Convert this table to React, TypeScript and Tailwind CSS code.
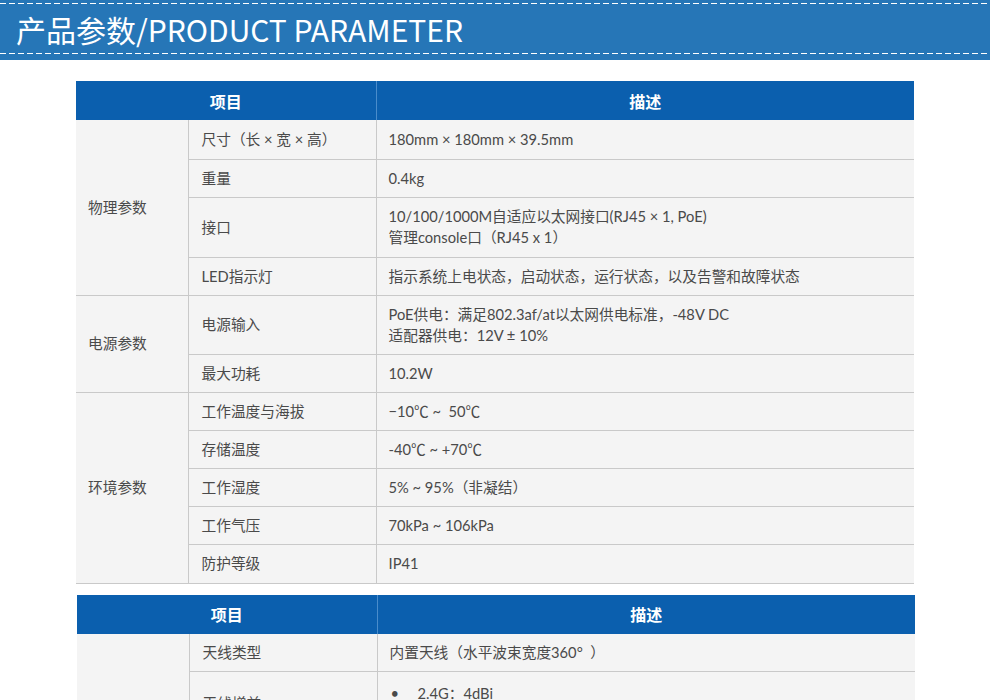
import React from "react";

type Row = { name: string; value: React.ReactNode; h?: string };
type Group = { title: string; rows: Row[] };

const TITLE_FONT = "font-['Noto_Sans_CJK_SC','Noto_Sans',sans-serif]";
const CELL_FONT = "font-['Lato','Noto_Sans_CJK_SC',sans-serif]";

const specs: Group[] = [
  {
    title: "物理参数",
    rows: [
      { name: "尺寸（长 × 宽 × 高）", value: "180mm × 180mm × 39.5mm", h: "h-[39px]" },
      { name: "重量", value: "0.4kg" },
      {
        name: "接口",
        h: "h-[60px]",
        value: (
          <>
            10/100/1000M自适应以太网接口(RJ45 × 1, PoE)
            <br />
            管理console口（RJ45 x 1）
          </>
        ),
      },
      { name: "LED指示灯", value: "指示系统上电状态，启动状态，运行状态，以及告警和故障状态" },
    ],
  },
  {
    title: "电源参数",
    rows: [
      {
        name: "电源输入",
        h: "h-[59px]",
        value: (
          <>
            PoE供电：满足802.3af/at以太网供电标准，-48V DC
            <br />
            适配器供电：12V ± 10%
          </>
        ),
      },
      { name: "最大功耗", value: "10.2W" },
    ],
  },
  {
    title: "环境参数",
    rows: [
      { name: "工作温度与海拔", value: "−10℃ ~\u00a0 50℃" },
      { name: "存储温度", value: "-40℃ ~ +70℃" },
      { name: "工作湿度", value: "5% ~ 95%（非凝结）" },
      { name: "工作气压", value: "70kPa ~ 106kPa" },
      { name: "防护等级", value: "IP41", h: "h-[39px]" },
    ],
  },
];

const radio: Group[] = [
  {
    title: "射频参数",
    rows: [
      { name: "天线类型", value: "内置天线（水平波束宽度360°\u00a0 ）" },
      {
        name: "天线增益",
        h: "h-[64px]",
        value: (
          <ul>
            <li className="flex">
              <span className="w-[28px] pl-[1px]">•</span>2.4G：4dBi
            </li>
            <li className="flex">
              <span className="w-[28px] pl-[1px]">•</span>5G：5dBi
            </li>
          </ul>
        ),
      },
      { name: "最大发射功率", value: "2.4G：20dBm；5G：20dBm" },
      { name: "传输速率", value: "2.4G：300Mbps；5G：867Mbps" },
      { name: "工作频段", value: "2.4GHz / 5GHz" },
    ],
  },
];

function SpecTable({ groups, className }: { groups: Group[]; className?: string }) {
  return (
    <table
      className={`w-[838px] table-fixed text-[14.7px] text-[#4a4a4a] ${CELL_FONT} ${className ?? ""}`}
    >
      <colgroup>
        <col className="w-[112px]" />
        <col className="w-[188px]" />
        <col className="w-[538px]" />
      </colgroup>
      <thead>
        <tr className={`h-[39px] bg-[#0b5fae] text-white text-[16px] ${TITLE_FONT}`}>
          <th colSpan={2} className="text-center font-bold">
            项目
          </th>
          <th className="text-center font-bold border-l border-[#4a8ccb]">描述</th>
        </tr>
      </thead>
      <tbody className="bg-[#f4f4f4]">
        {groups.map((g) =>
          g.rows.map((r, i) => (
            <tr key={g.title + r.name} className="border-b border-[#c9c9c9]">
              {i === 0 && (
                <td
                  rowSpan={g.rows.length}
                  className="pl-[12px] align-middle border-b border-[#c9c9c9]"
                >
                  {g.title}
                </td>
              )}
              <td className={`pl-[13px] border-l border-[#c9c9c9] ${r.h ?? "h-[38px]"}`}>
                {r.name}
              </td>
              <td className="pl-[12px] leading-[21px] border-l border-[#c9c9c9]">{r.value}</td>
            </tr>
          ))
        )}
      </tbody>
    </table>
  );
}

export default function App() {
  return (
    <div className={`w-[990px] h-[700px] overflow-hidden bg-white ${TITLE_FONT}`}>
      <div className="h-[60px] bg-[#2676b7] flex flex-col">
        <div className="mt-[3px] h-px bg-[repeating-linear-gradient(90deg,#ffffff_0_6px,transparent_6px_9px)]" />
        <div className="flex-1 flex items-center pl-[16px] text-white text-[30px] leading-none">
          产品参数/PRODUCT PARAMETER
        </div>
        <div className="mb-[6px] h-px bg-[repeating-linear-gradient(90deg,#ffffff_0_6px,transparent_6px_9px)]" />
      </div>

      <SpecTable groups={specs} className="mt-[21px] ml-[76px]" />
      <SpecTable groups={radio} className="mt-[11px] ml-[77px]" />
    </div>
  );
}
